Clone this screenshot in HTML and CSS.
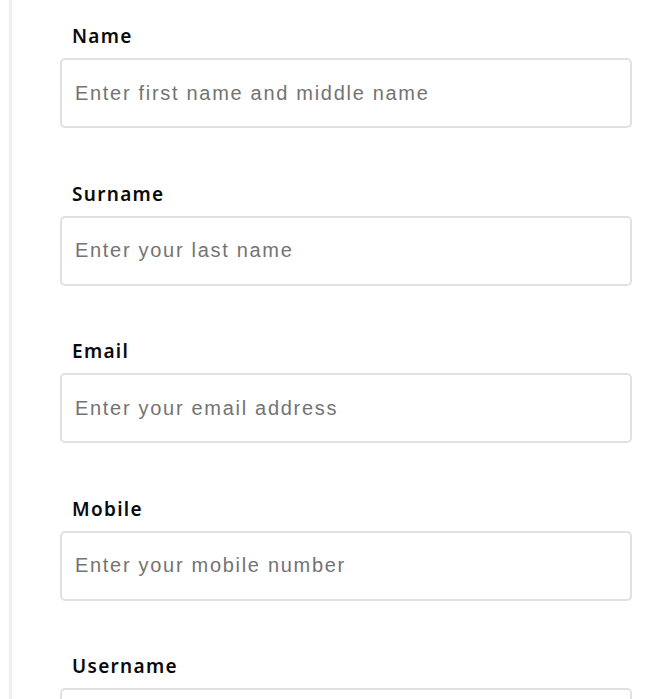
FILE: index.html
```html
<!DOCTYPE html>
<html>
<head>
<meta charset="utf-8">
<link rel="stylesheet" href="styles.css">
</head>
<body>
<div class="page">
  <form class="form">
    <div class="field">
      <label class="label" for="name">Name</label>
      <input class="input" id="name" type="text" placeholder="Enter first name and middle name">
    </div>
    <div class="field">
      <label class="label" for="surname">Surname</label>
      <input class="input" id="surname" type="text" placeholder="Enter your last name">
    </div>
    <div class="field">
      <label class="label" for="email">Email</label>
      <input class="input" id="email" type="email" placeholder="Enter your email address">
    </div>
    <div class="field">
      <label class="label" for="mobile">Mobile</label>
      <input class="input" id="mobile" type="tel" placeholder="Enter your mobile number">
    </div>
    <div class="field">
      <label class="label" for="username">Username</label>
      <input class="input" id="username" type="text" placeholder="Enter your username">
    </div>
  </form>
</div>
</body>
</html>
```
FILE: styles.css
```css
html, body {
  margin: 0;
  padding: 0;
  background: #ffffff;
}
.page {
  margin-left: 9px;
  border-left: 3px solid #efefef;
  padding: 22px 22px 0 48px;
  min-height: 100vh;
  box-sizing: border-box;
}
.form {
  display: flex;
  flex-direction: column;
  gap: 51.5px;
}
.field {
  display: flex;
  flex-direction: column;
  gap: 8px;
}
.label {
  font-family: "Noto Sans", "Open Sans", sans-serif;
  font-weight: 600;
  font-size: 19px;
  line-height: 28px;
  letter-spacing: 1.3px;
  color: #0a0a0a;
  padding-left: 12px;
}
.input {
  box-sizing: border-box;
  width: 100%;
  height: 70px;
  border: 2px solid #e1e1e5;
  border-radius: 5px;
  padding: 0 13px;
  font-family: "Liberation Sans", Arial, sans-serif;
  font-size: 20px;
  letter-spacing: 1.7px;
  color: #222;
  outline: none;
  background: #fff;
}
.input::placeholder {
  color: #737373;
}
```
